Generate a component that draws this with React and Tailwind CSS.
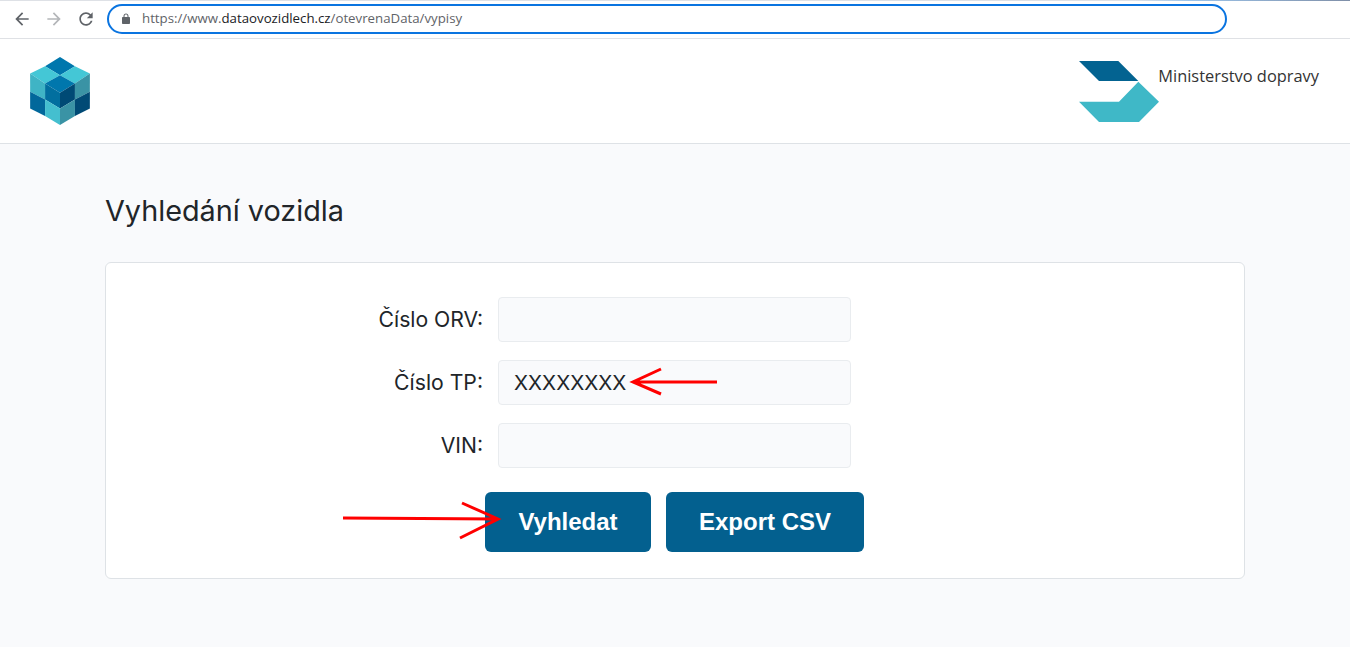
const ICON_BACK = 'M20 11H7.83l5.59-5.59L12 4l-8 8 8 8 1.41-1.41L7.83 13H20v-2z';
const ICON_FORWARD = 'M12 4l-1.41 1.41L16.17 11H4v2h12.17l-5.58 5.59L12 20l8-8z';
const ICON_RELOAD =
  'M17.65 6.35C16.2 4.9 14.21 4 12 4c-4.42 0-7.99 3.58-7.99 8s3.57 8 7.99 8c3.73 0 6.84-2.55 7.73-6h-2.08c-.82 2.33-3.04 4-5.65 4-3.31 0-6-2.69-6-6s2.69-6 6-6c1.66 0 3.14.69 4.22 1.78L13 11h7V4l-2.35 2.35z';
const ICON_LOCK =
  'M18 8h-1V6c0-2.76-2.24-5-5-5S7 3.24 7 6v2H6c-1.1 0-2 .9-2 2v10c0 1.1.9 2 2 2h12c1.1 0 2-.9 2-2V10c0-1.1-.9-2-2-2zM9 6c0-1.66 1.34-3 3-3s3 1.34 3 3v2H9V6z';

const cubeFaces = [
  ['#0077ad', '180,50 225,78 180,105 135,78'],
  ['#44c7d6', '135,78 180,105 135,130 90,100'],
  ['#44c7d6', '225,78 270,100 225,130 180,105'],
  ['#0077ad', '180,105 225,130 180,158 135,130'],
  ['#026f9f', '135,130 180,158 180,205 135,178'],
  ['#004a75', '225,130 180,158 180,205 225,178'],
  ['#3fb4c5', '90,100 135,130 135,178 90,155'],
  ['#3a93a5', '225,130 270,100 270,155 225,178'],
  ['#02689b', '90,155 135,178 135,228 90,205'],
  ['#44bfcf', '135,178 180,205 180,255 135,228'],
  ['#3a93a5', '180,205 225,178 225,228 180,255'],
  ['#004a75', '225,178 270,155 270,205 225,228'],
];

function NavIcon({ d, className }) {
  return (
    <svg viewBox="0 0 24 24" className={className} fill="currentColor">
      <path d={d} />
    </svg>
  );
}

function BrowserBar() {
  return (
    <div className="h-[39px] bg-white border-b border-[#dfe1e5] flex flex-col">
      <div className="h-[1px] bg-[linear-gradient(90deg,#dee1e6_0%,#dee1e6_84%,#9cc4ea_88%,#7f8fa8_100%)]" />
      <div className="flex items-center flex-1 pl-[12px] pb-[1px]">
        <NavIcon d={ICON_BACK} className="w-[20px] h-[20px] text-[#5f6368]" />
        <NavIcon d={ICON_FORWARD} className="w-[20px] h-[20px] ml-[12px] text-[#b4b6b9]" />
        <NavIcon d={ICON_RELOAD} className="w-[20px] h-[20px] ml-[12px] text-[#5f6368]" />
        <div className="ml-[11px] w-[1120px] h-[30px] rounded-full border-2 border-[#0a74e0] flex items-center pl-[11px]">
          <NavIcon d={ICON_LOCK} className="w-[12px] h-[12px] text-[#5f6368]" />
          <div className="ml-[10px] text-[13.25px] font-['Open_Sans',sans-serif] text-[#5f6368] whitespace-nowrap">
            https://www.<span className="text-[#202124]">dataovozidlech.cz</span>/otevrenaData/vypisy
          </div>
        </div>
      </div>
    </div>
  );
}

function SiteHeader() {
  return (
    <header className="h-[105px] bg-white border-b border-[#dee2e6] flex justify-between pl-[30px] pr-[31px]">
      {/* cube logo */}
      <svg viewBox="90 50 180 205" className="w-[60px] h-[68px] mt-[18px]">
        {cubeFaces.map(([fill, points]) => (
          <polygon key={points} fill={fill} points={points} />
        ))}
      </svg>

      <div className="flex items-start mt-[22px]">
        <svg viewBox="57 48 240 183" className="w-[80px] h-[61px]">
          <polygon fill="#036391" points="57,48 175,48 235,108 117,108" />
          <polygon fill="#3fb8c7" points="235,110 297,170 237,231 117,231 57,170 177,170" />
        </svg>
        <div className="-ml-[1px] mt-[3px] text-[16.4px] leading-[24px] text-[#333333] font-['Open_Sans',sans-serif] whitespace-nowrap">
          Ministerstvo dopravy
        </div>
      </div>
    </header>
  );
}

function FormRow({ label, value }) {
  return (
    <div className="flex items-center gap-[15px]">
      <label className="w-[377px] text-right text-[21.2px] text-[#212529]">{label}</label>
      <input
        readOnly
        value={value}
        className="w-[353px] h-[45px] px-[15px] bg-[#f9fafc] border border-[#e9ecef] rounded-[4px] text-[20.6px] text-[#212529] outline-none"
      />
    </div>
  );
}

function SearchCard() {
  return (
    <div className="bg-white border border-[#dee2e6] rounded-[6px] pt-[34px] pb-[26px] flex flex-col gap-[18px]">
      <FormRow label="Číslo ORV:" value="" />
      <FormRow label="Číslo TP:" value="XXXXXXXX" />
      <FormRow label="VIN:" value="" />
      <div className="flex gap-[15px] ml-[379px] mt-[6px] font-['Liberation_Sans',sans-serif] font-bold text-2xl text-white">
        <button className="w-[166px] h-[60px] rounded-[6px] bg-[#03608f]">Vyhledat</button>
        <button className="w-[198px] h-[60px] rounded-[6px] bg-[#03608f]">Export CSV</button>
      </div>
    </div>
  );
}

export default function App() {
  return (
    <div className="relative h-[647px] overflow-hidden bg-[#f9fafc] font-['Inter',sans-serif]">
      <BrowserBar />
      <SiteHeader />

      <main className="px-[105px] pt-[50px]">
        <h1 className="text-[28.8px] leading-[34px] text-[#212529] mb-[34px]">Vyhledání vozidla</h1>
        <SearchCard />
      </main>

      {/* red annotation arrows drawn over the page */}
      <svg
        className="absolute inset-0 w-[1350px] h-[647px] pointer-events-none"
        viewBox="0 0 1350 647"
        fill="none"
        stroke="#ff0000"
        strokeWidth="3"
      >
        <path d="M717 382H633M661 369L633 382L661 394" />
        <path d="M343 518L498 519M462 503L498 519L460 538" />
      </svg>
    </div>
  );
}
